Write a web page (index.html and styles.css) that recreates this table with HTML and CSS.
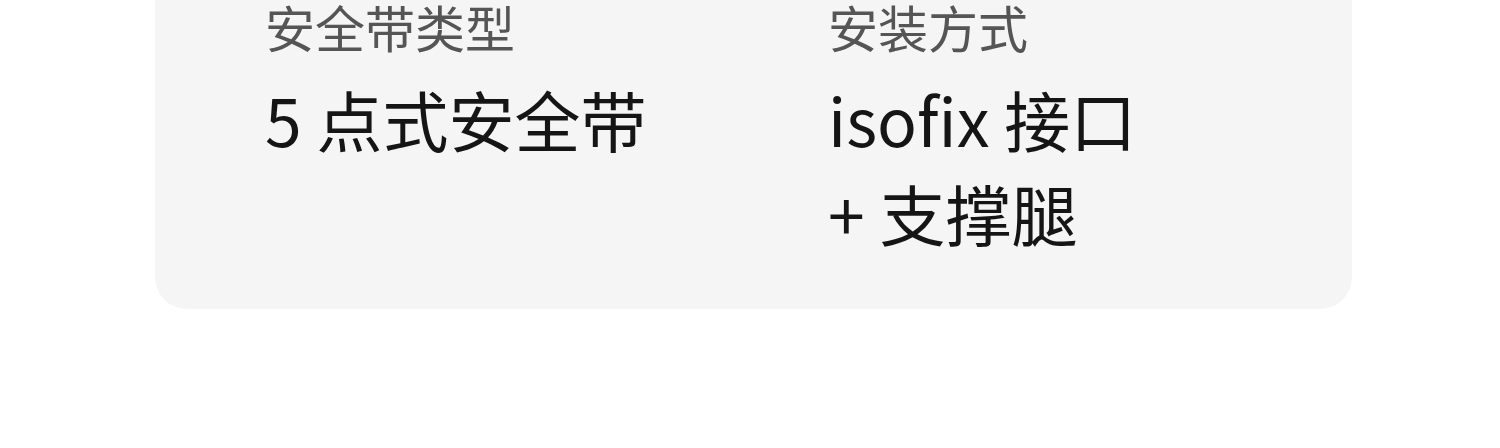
FILE: index.html
```html
<!DOCTYPE html>
<html lang="zh-CN">
<head>
    <meta charset="UTF-8">
    <meta name="viewport" content="width=device-width, initial-scale=1.0">
    <title>安全座椅参数</title>
    <link rel="stylesheet" href="styles.css">
</head>
<body>
    <div class="specs">
        <div class="spec">
            <div class="spec-label">安全带类型</div>
            <div class="spec-value">5 点式安全带</div>
        </div>
        <div class="spec">
            <div class="spec-label">安装方式</div>
            <div class="spec-value">isofix 接口 + 支撑腿</div>
        </div>
    </div>
</body>
</html>
```

FILE: styles.css
```css
body {
    font-family: "Noto Sans CJK SC", "Noto Sans", sans-serif;
    margin: 0;
    padding: 0;
    background: #ffffff;
    color: #222;
}
.specs {
    display: grid;
    grid-template-columns: 563px 350px;
    width: 1197px;
    box-sizing: border-box;
    margin: -60px 0 0 155px;
    padding: 60px 110px 50px;
    background: #f5f5f5;
    border-radius: 0 0 32px 32px;
}
.spec-label {
    font-size: 50px;
    line-height: 52px;
    color: #555;
}
.spec-value {
    margin-top: 19px;
    font-size: 66px;
    line-height: 94px;
    color: #151515;
}
```
